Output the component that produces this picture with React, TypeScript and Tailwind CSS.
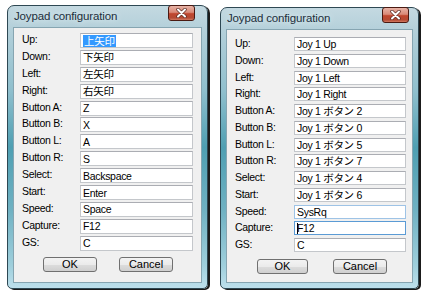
import React from 'react';

type Row = { label: string; value: string; selected?: boolean; tone?: 'hover' | 'focus' };

const leftRows: Row[] = [
  { label: 'Up:', value: '上矢印', selected: true },
  { label: 'Down:', value: '下矢印' },
  { label: 'Left:', value: '左矢印' },
  { label: 'Right:', value: '右矢印' },
  { label: 'Button A:', value: 'Z' },
  { label: 'Button B:', value: 'X' },
  { label: 'Button L:', value: 'A' },
  { label: 'Button R:', value: 'S' },
  { label: 'Select:', value: 'Backspace' },
  { label: 'Start:', value: 'Enter' },
  { label: 'Speed:', value: 'Space' },
  { label: 'Capture:', value: 'F12' },
  { label: 'GS:', value: 'C' },
];

const rightRows: Row[] = [
  { label: 'Up:', value: 'Joy 1 Up' },
  { label: 'Down:', value: 'Joy 1 Down' },
  { label: 'Left:', value: 'Joy 1 Left' },
  { label: 'Right:', value: 'Joy 1 Right' },
  { label: 'Button A:', value: 'Joy 1 ボタン 2' },
  { label: 'Button B:', value: 'Joy 1 ボタン 0' },
  { label: 'Button L:', value: 'Joy 1 ボタン 5' },
  { label: 'Button R:', value: 'Joy 1 ボタン 7' },
  { label: 'Select:', value: 'Joy 1 ボタン 4' },
  { label: 'Start:', value: 'Joy 1 ボタン 6' },
  { label: 'Speed:', value: 'SysRq', tone: 'hover' },
  { label: 'Capture:', value: 'F12', tone: 'focus' },
  { label: 'GS:', value: 'C' },
];

const CloseButton = ({ className }: { className: string }) => (
  <div
    className={`absolute top-[-1px] w-[27px] h-[16px] rounded-[3px] border border-[#4a1a12] bg-[linear-gradient(180deg,#e8b3a6_0%,#d98a78_45%,#c0462e_55%,#b44a33_85%,#d27a62_100%)] flex items-center justify-center ${className}`}
  >
    <svg width="11" height="10" viewBox="0 0 11 10">
      <path d="M2 1.5 L9 8.5 M9 1.5 L2 8.5" stroke="#5a2a22" strokeWidth="3.4" strokeLinecap="round" />
      <path d="M2 1.5 L9 8.5 M9 1.5 L2 8.5" stroke="#ffffff" strokeWidth="2" strokeLinecap="round" />
    </svg>
  </div>
);

const Field = ({ row, box }: { row: Row; box: string }) => {
  const border =
    row.tone === 'focus'
      ? 'border-[#5b9bd5]'
      : row.tone === 'hover'
      ? 'border-[#9ec3e6]'
      : 'border-[#c4c7cb] border-t-[#abadb3]';
  return (
    <div className={`${box} ${border} border bg-white flex items-center pl-[2px] text-black overflow-hidden whitespace-nowrap`}>
      {row.tone === 'focus' && <span className="w-px h-[11px] bg-black mr-[-1px]" />}
      {row.selected ? (
        <span className="bg-[#3399ff] text-white leading-[12px] px-px">{row.value}</span>
      ) : (
        <span className="leading-[12px]">{row.value}</span>
      )}
    </div>
  );
};

const Dialog = ({
  rows,
  outer,
  closePos,
  clientPad,
  rowH,
  labelW,
  box,
  btnRow,
  okW,
  cancelW,
}: {
  rows: Row[];
  outer: string;
  closePos: string;
  clientPad: string;
  rowH: string;
  labelW: string;
  box: string;
  btnRow: string;
  okW: string;
  cancelW: string;
}) => (
  <div
    className={`relative shrink-0 flex flex-col px-[5px] pb-[5px] rounded-t-[7px] rounded-b-[5px] border border-[#2e4853] shadow-[2px_1px_0_#1b1b1b] bg-[linear-gradient(180deg,#c4d9e1_0%,#b2cfd9_9%,#8fbfcd_30%,#4f9fb2_50%,#6fb1c2_72%,#9fcfdc_92%,#bde0ec_100%)] ${outer}`}
  >
    <div className="h-[21px] shrink-0 flex items-center pl-px text-[11.5px] tracking-[-0.15px] text-[#1c2e3b] font-['Liberation_Sans',sans-serif] [text-shadow:0_0_6px_#e8f4f8]">
      Joypad configuration
    </div>
    <CloseButton className={closePos} />
    <div className={`flex-1 border border-[#86a5b1] bg-[#f0f0f0] flex flex-col pl-[8px] ${clientPad}`}>
      {rows.map((r) => (
        <div key={r.label} className={`${rowH} flex items-start`}>
          <div className={`${labelW} shrink-0 text-[10.5px] leading-[12px] tracking-[-0.3px] text-black font-['Liberation_Sans',sans-serif]`}>
            {r.label}
          </div>
          <div className="text-[10.5px] tracking-[-0.3px] font-['Liberation_Sans','Noto_Sans_CJK_JP',sans-serif]">
            <Field row={r} box={box} />
          </div>
        </div>
      ))}
      <div className={`flex mt-[4px] font-['Liberation_Sans',sans-serif] text-[11px] text-black ${btnRow}`}>
        <div className={`${okW} h-[15px] rounded-[3px] border border-[#707070] bg-[linear-gradient(180deg,#f3f3f3_0%,#ebebeb_50%,#dddddd_51%,#cfcfcf_100%)] flex items-center justify-center leading-none`}>
          OK
        </div>
        <div className={`${cancelW} h-[15px] rounded-[3px] border border-[#707070] bg-[linear-gradient(180deg,#f3f3f3_0%,#ebebeb_50%,#dddddd_51%,#cfcfcf_100%)] flex items-center justify-center leading-none`}>
          Cancel
        </div>
      </div>
    </div>
  </div>
);

export default function App() {
  return (
    <div className="w-[433px] h-[295px] bg-white flex items-start overflow-hidden">
      <Dialog
        rows={leftRows}
        outer="ml-[7px] mt-[5px] w-[201px] h-[284px]"
        closePos="right-[12px]"
        clientPad="pt-[5px]"
        rowH="h-[16.9px]"
        labelW="w-[58px]"
        box="w-[113px] h-[15px]"
        btnRow="pl-[21px] gap-[22px]"
        okW="w-[54px]"
        cancelW="w-[54px]"
      />
      <Dialog
        rows={rightRows}
        outer="ml-[12px] mt-[7px] w-[199px] h-[282px]"
        closePos="right-[9px]"
        clientPad="pt-[7px]"
        rowH="h-[16.75px]"
        labelW="w-[59px]"
        box="w-[112px] h-[14px]"
        btnRow="pl-[22px] gap-[25px]"
        okW="w-[51px]"
        cancelW="w-[54px]"
      />
    </div>
  );
}
